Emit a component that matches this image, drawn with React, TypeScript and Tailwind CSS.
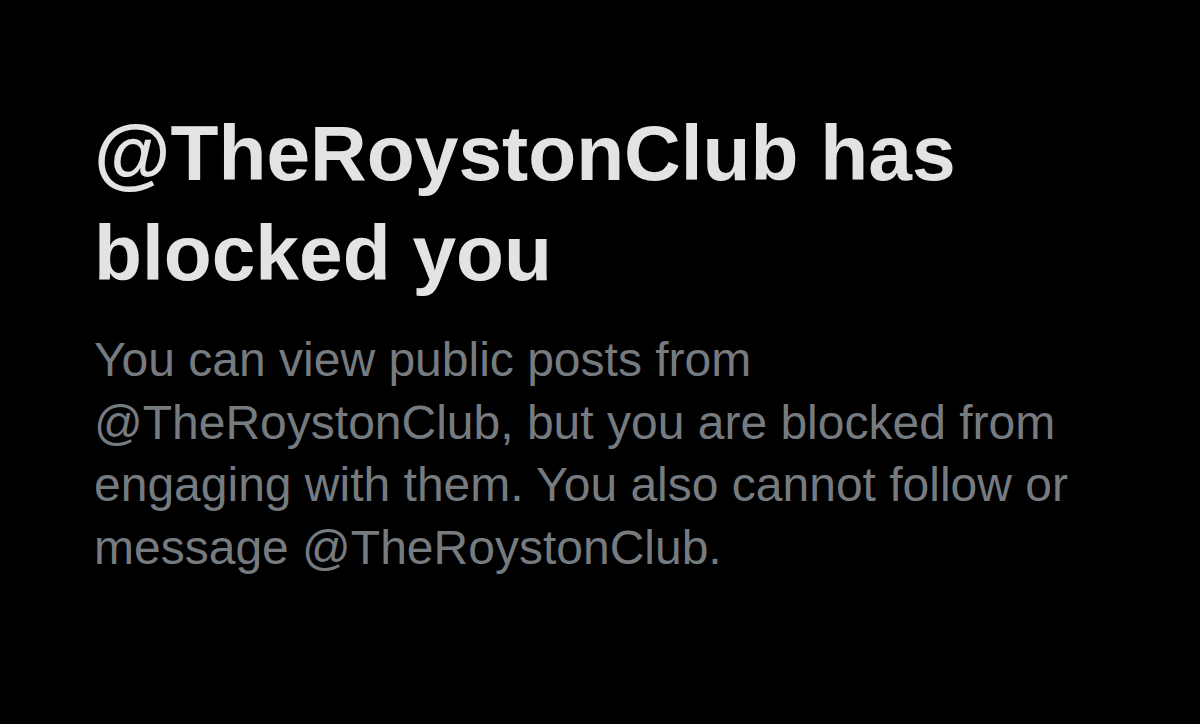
import React from "react";

const HANDLE = "@TheRoystonClub";

function BlockedNotice() {
  return (
    <div className="pl-[94px] pt-[103px] w-[1110px]">
      <h1 className="font-bold text-[78.5px] leading-[100px] text-[#e2e3e4]">
        {HANDLE} has blocked you
      </h1>
      <p className="mt-[26px] text-[48px] leading-[62.5px] text-[#767b80]">
        You can view public posts from {HANDLE}, but you are blocked from
        engaging with them. You also cannot follow or message {HANDLE}.
      </p>
    </div>
  );
}

export default function App() {
  return (
    <div
      className="w-[1200px] h-[724px] bg-black overflow-hidden"
      style={{ fontFamily: '"Liberation Sans", Arial, sans-serif' }}
    >
      <BlockedNotice />
    </div>
  );
}
